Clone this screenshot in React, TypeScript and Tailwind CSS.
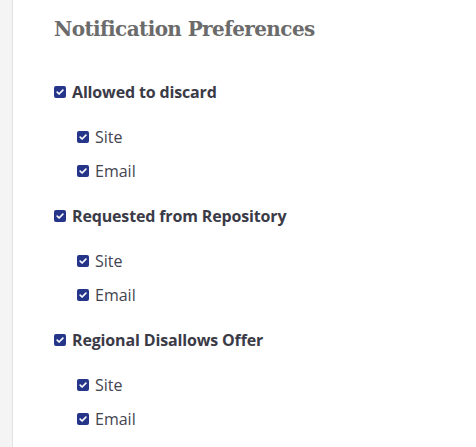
const groups = ['Allowed to discard', 'Requested from Repository', 'Regional Disallows Offer']

function Box() {
  return (
    <span className="flex h-3 w-3 shrink-0 items-center justify-center rounded-[2px] bg-[#25358a]">
      <svg viewBox="0 0 12 12" className="h-3 w-3">
        <path d="M3.2 6.2 L5.1 8 L8.9 4.2" fill="none" stroke="#fff" strokeWidth="1.7" strokeLinecap="round" strokeLinejoin="round" />
      </svg>
    </span>
  )
}

export default function App() {
  return (
    <div className="flex h-[447px] w-[476px] bg-white font-['Open_Sans',sans-serif]">
      <div className="w-[13px] shrink-0 border-r border-[#e2e2e2] bg-[#f4f4f4]" />
      <div className="flex flex-col pl-[41px] pt-[14px]">
        <h1 className="h-[30px] font-['DejaVu_Serif',serif] text-[20px] font-bold leading-[30px] tracking-[-0.6px] text-[#6b6b6b]">
          Notification Preferences
        </h1>
        <div className="mt-[31px] flex flex-col gap-[11px]">
          {groups.map((g) => (
            <div key={g} className="flex flex-col gap-[11px]">
              <label className="flex h-[34px] items-center gap-[6px] text-[16px] font-bold tracking-[-0.15px] text-[#3b3b47]">
                <Box />
                {g}
              </label>
              <div className="flex flex-col pl-[23px]">
                {['Site', 'Email'].map((s) => (
                  <label key={s} className="flex h-[34px] items-center gap-[6px] text-[16px] text-[#444450]">
                    <Box />
                    {s}
                  </label>
                ))}
              </div>
            </div>
          ))}
        </div>
      </div>
    </div>
  )
}
